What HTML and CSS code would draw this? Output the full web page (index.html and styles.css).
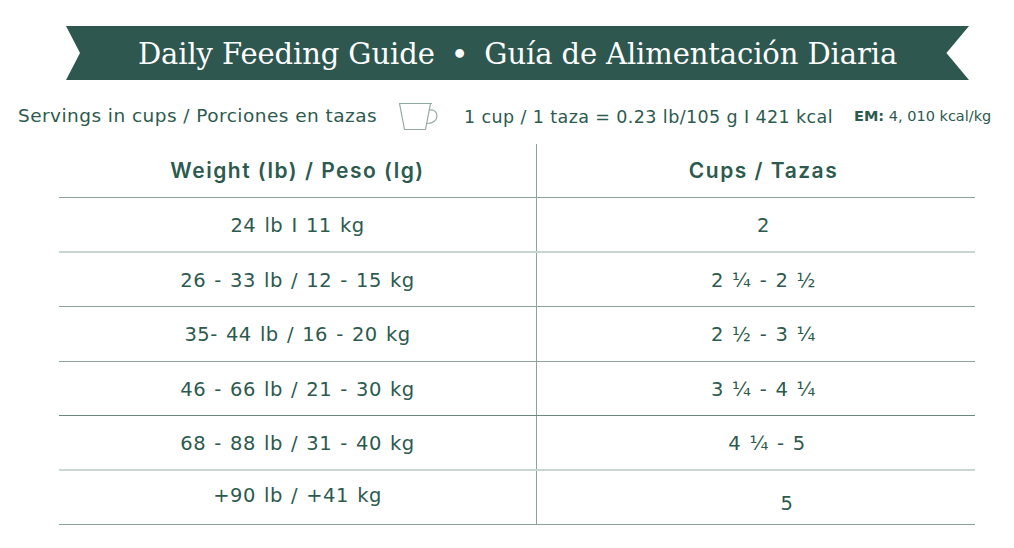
FILE: index.html
```html
<!DOCTYPE html>
<html lang="es">
<head>
<meta charset="utf-8">
<title>Daily Feeding Guide</title>
<link rel="stylesheet" href="styles.css">
</head>
<body>
<div class="banner">
  <h1 class="title"><span>Daily Feeding Guide</span><span class="dot">•</span><span>Guía de Alimentación Diaria</span></h1>
</div>
<div class="info">
  <span class="servings">Servings in cups / Porciones en tazas</span>
  <svg class="cup" width="44" height="30" viewBox="0 0 44 30" aria-hidden="true">
    <path d="M1 1.5 H34 M1.5 1.5 L6.5 27.5 H27.5 L32.5 1.5 M31 8 C42 6 42 22 29 21.5" fill="none" stroke="#93a8a2" stroke-width="1.2"/>
  </svg>
  <span class="ratio">1 cup / 1 taza = 0.23 lb/105 g I 421 kcal</span>
  <span class="em"><b>EM:</b> 4, 010 kcal/kg</span>
</div>
<div class="table">
  <div class="row head"><div class="cell">Weight (lb) / Peso (lg)</div><div class="cell right">Cups / Tazas</div></div>
  <div class="row"><div class="cell">24 lb I 11 kg</div><div class="cell right">2</div></div>
  <div class="row"><div class="cell">26 - 33 lb / 12 - 15 kg</div><div class="cell right">2 ¼ - 2 ½</div></div>
  <div class="row"><div class="cell">35- 44 lb / 16 - 20 kg</div><div class="cell right">2 ½ - 3 ¼</div></div>
  <div class="row"><div class="cell">46 - 66 lb / 21 - 30 kg</div><div class="cell right">3 ¼ - 4 ¼</div></div>
  <div class="row"><div class="cell">68 - 88 lb / 31 - 40 kg</div><div class="cell right shift1">4 ¼ - 5</div></div>
  <div class="row"><div class="cell up">+90 lb / +41 kg</div><div class="cell right shift2">5</div></div>
</div>
</body>
</html>
```
FILE: styles.css
```css
* { box-sizing: border-box; }
html, body { margin: 0; padding: 0; background: #fff; }
body {
  width: 1014px;
  height: 548px;
  overflow: hidden;
  font-family: "DejaVu Sans", Inter, sans-serif;
  color: #2d5a4f;
}
.banner {
  margin: 26px 0 0 66px;
  width: 903px;
  height: 54px;
  background: #2e574f;
  clip-path: polygon(0 0, 100% 0, 97.5% 50%, 100% 100%, 0 100%, 14px 50%);
  display: flex;
  align-items: center;
  justify-content: center;
}
.title {
  margin: 0;
  font-family: "DejaVu Serif", serif;
  font-weight: normal;
  font-size: 29px;
  color: #fff;
  display: flex;
  align-items: center;
  gap: 16px;
  letter-spacing: -0.1px;
  padding-top: 2px;
}
.title .dot { font-size: 30px; }
.info {
  display: flex;
  align-items: center;
  height: 42px;
  margin-top: 14px;
  padding-left: 18px;
}
.servings { font-size: 18.5px; letter-spacing: 0.45px; }
.cup { margin-left: 21px; margin-top: 4px; }
.ratio { font-size: 17.5px; margin-left: 22px; margin-top: 4px; letter-spacing: 0.4px; }
.em { font-size: 14.5px; margin-left: 21px; margin-top: 2px; }
.em b { font-weight: bold; }
.table {
  margin-left: 59px;
  width: 916px;
  margin-top: 8px;
}
.row {
  display: grid;
  grid-template-columns: 477px 439px;
  height: 54.5px;
  border-bottom: 1px solid #8fa39d;
}
.row.head { height: 54px; }
.row:nth-child(2), .row:nth-child(6) { border-bottom: 2px solid #c9d6d2; }
.row:nth-child(5) { border-bottom-color: #6e8680; }
.cell {
  display: flex;
  align-items: center;
  justify-content: center;
  font-size: 19.5px;
  letter-spacing: 0.5px;
  word-spacing: 1.5px;
  padding-top: 2px;
}
.row.head .cell {
  font-family: Inter, sans-serif;
  font-weight: 600;
  font-size: 21px;
  letter-spacing: 1.5px;
  word-spacing: 0;
  padding-top: 0;
}
.cell.right {
  border-left: 1px solid #8fa39d;
  padding-left: 15px;
}
.cell.shift1 { padding-left: 22px; }
.cell.shift2 { padding-left: 62px; padding-top: 12px; }
.cell.up { padding-top: 0; padding-bottom: 4px; }
```
